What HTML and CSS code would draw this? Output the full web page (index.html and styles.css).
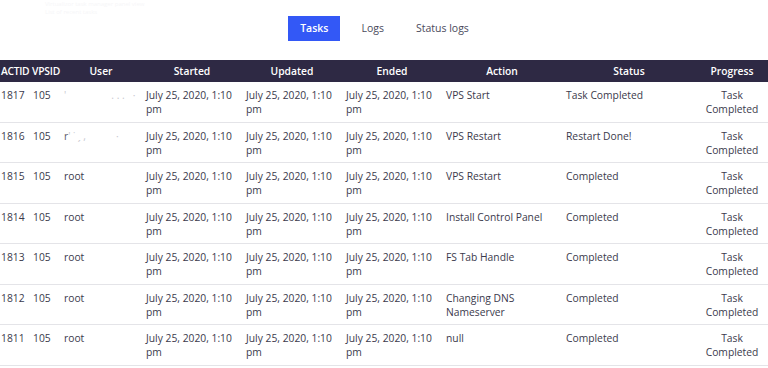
FILE: index.html
```html
<!DOCTYPE html>
<html>
<head>
<meta charset="utf-8">
<link rel="stylesheet" href="styles.css">
</head>
<body>
<div class="ghost">
  <div class="ghost-line">Virtualizor task manager panel view</div>
  <div class="ghost-line">List of recent tasks</div>
</div>
<nav class="tabs">
  <button class="tab active">Tasks</button>
  <button class="tab">Logs</button>
  <button class="tab">Status logs</button>
</nav>
<table class="tasks">
  <colgroup>
    <col class="c-id"><col class="c-vps"><col class="c-user"><col class="c-date"><col class="c-date"><col class="c-date"><col class="c-action"><col class="c-status"><col class="c-progress">
  </colgroup>
  <thead>
    <tr>
      <th class="first">ACTID</th><th class="second">VPSID</th><th>User</th><th>Started</th><th>Updated</th><th>Ended</th><th>Action</th><th>Status</th><th>Progress</th>
    </tr>
  </thead>
  <tbody>
    <tr>
      <td class="first">1817</td><td>105</td><td><span class="blur">'<span class="gap"></span>. . .<span class="gap2"></span>·</span></td>
      <td>July 25, 2020, 1:10 pm</td><td>July 25, 2020, 1:10 pm</td><td>July 25, 2020, 1:10 pm</td>
      <td>VPS Start</td><td>Task Completed</td><td class="prog">Task Completed</td>
    </tr>
    <tr>
      <td class="first">1816</td><td>105</td><td><span class="blur"><span class="r">r</span>' ˙ ˏ ,<span class="gap3"></span>·</span></td>
      <td>July 25, 2020, 1:10 pm</td><td>July 25, 2020, 1:10 pm</td><td>July 25, 2020, 1:10 pm</td>
      <td>VPS Restart</td><td>Restart Done!</td><td class="prog">Task Completed</td>
    </tr>
    <tr>
      <td class="first">1815</td><td>105</td><td>root</td>
      <td>July 25, 2020, 1:10 pm</td><td>July 25, 2020, 1:10 pm</td><td>July 25, 2020, 1:10 pm</td>
      <td>VPS Restart</td><td>Completed</td><td class="prog">Task Completed</td>
    </tr>
    <tr>
      <td class="first">1814</td><td>105</td><td>root</td>
      <td>July 25, 2020, 1:10 pm</td><td>July 25, 2020, 1:10 pm</td><td>July 25, 2020, 1:10 pm</td>
      <td>Install Control Panel</td><td>Completed</td><td class="prog">Task Completed</td>
    </tr>
    <tr>
      <td class="first">1813</td><td>105</td><td>root</td>
      <td>July 25, 2020, 1:10 pm</td><td>July 25, 2020, 1:10 pm</td><td>July 25, 2020, 1:10 pm</td>
      <td>FS Tab Handle</td><td>Completed</td><td class="prog">Task Completed</td>
    </tr>
    <tr>
      <td class="first">1812</td><td>105</td><td>root</td>
      <td>July 25, 2020, 1:10 pm</td><td>July 25, 2020, 1:10 pm</td><td>July 25, 2020, 1:10 pm</td>
      <td>Changing DNS Nameserver</td><td>Completed</td><td class="prog">Task Completed</td>
    </tr>
    <tr>
      <td class="first">1811</td><td>105</td><td>root</td>
      <td>July 25, 2020, 1:10 pm</td><td>July 25, 2020, 1:10 pm</td><td>July 25, 2020, 1:10 pm</td>
      <td>null</td><td>Completed</td><td class="prog">Task Completed</td>
    </tr>
  </tbody>
</table>
</body>
</html>
```

FILE: styles.css
```css
html, body {
  margin: 0;
  padding: 0;
  background: #ffffff;
}
body {
  font-family: "Open Sans", "Noto Sans", sans-serif;
  font-size: 10.3px;
  color: #3b3a4c;
  width: 768px;
  height: 368px;
  overflow: hidden;
}
.ghost {
  height: 16px;
  padding: 0 0 0 45px;
  color: #f6f6f8;
  font-size: 6px;
  line-height: 8px;
}
.tabs {
  display: flex;
  justify-content: center;
  gap: 10px;
  height: 25px;
  margin-bottom: 19px;
}
.tab {
  font-family: inherit;
  font-size: 10.5px;
  font-weight: 500;
  color: #4a4a5c;
  background: transparent;
  border: none;
  padding: 0 11px;
  height: 25px;
  line-height: 25px;
}
.tab.active {
  background: #3358f6;
  color: #ffffff;
  font-weight: 600;
  padding: 0 12px;
}
.tasks {
  border-collapse: collapse;
  table-layout: fixed;
  width: 768px;
}
.c-id { width: 29px; }
.c-vps { width: 31px; }
.c-user { width: 82px; }
.c-date { width: 100px; }
.c-action { width: 120px; }
.c-status { width: 134px; }
.c-progress { width: 72px; }
.tasks th {
  background: #2e2944;
  color: #ffffff;
  font-weight: 600;
  height: 22px;
  padding: 0 2px;
  text-align: center;
  white-space: nowrap;
  line-height: 22px;
}
.tasks th.first {
  padding: 0 0 0 1px;
  text-align: left;
  letter-spacing: -0.3px;
}
.tasks th.second {
  padding: 0 0 0 3px;
  text-align: left;
  letter-spacing: -0.2px;
}
.tasks td {
  padding: 6px 4px 5px 4px;
  vertical-align: top;
  line-height: 14.25px;
  border-bottom: 1px solid #e4e4e8;
  text-align: left;
}
.tasks td.first {
  padding-left: 1px;
}
.tasks td.prog {
  text-align: center;
  padding: 6px 0 5px 0;
}
.blur {
  color: #c9c9d0;
  white-space: nowrap;
}
.blur .r {
  color: #5a5a6a;
}
.gap { display: inline-block; width: 45px; }
.gap2 { display: inline-block; width: 8px; }
.gap3 { display: inline-block; width: 30px; }
```
